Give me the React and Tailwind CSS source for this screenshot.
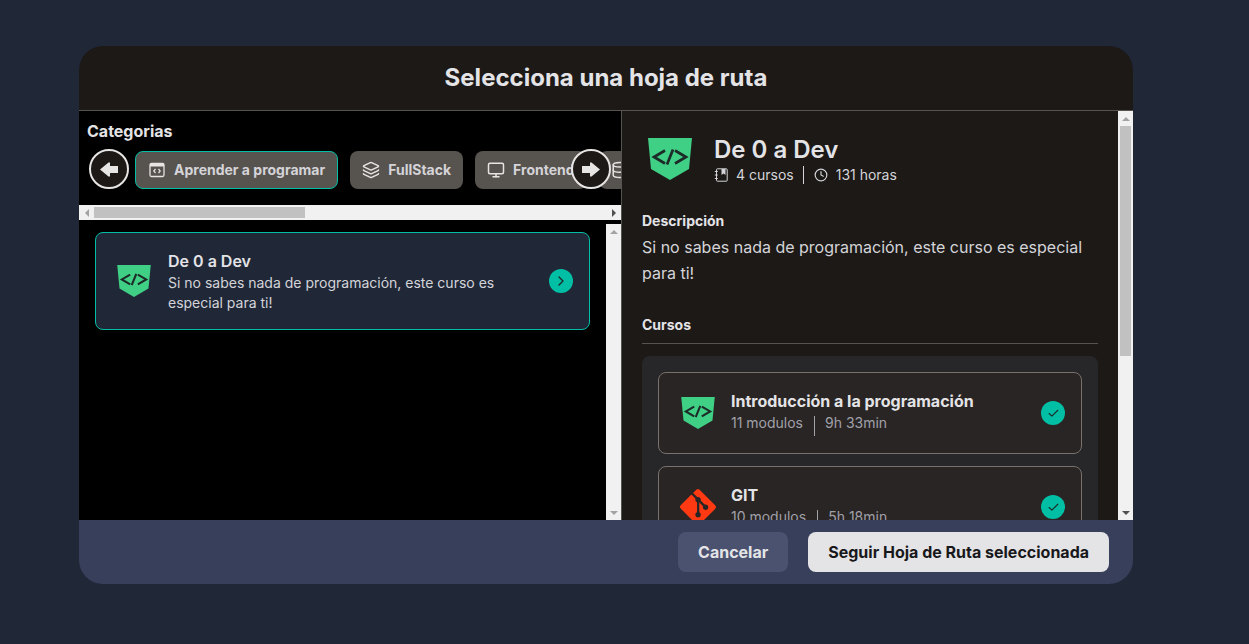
import React from "react";
import { Layers, Monitor, Database, Clock, Check, ChevronRight } from "lucide-react";
import { SiGit } from "react-icons/si";

function Shield({ className }) {
  return (
    <svg viewBox="0 0 44 42" className={className}>
      <path d="M0 0H44L41 31L22 42L3 31Z" fill="#3fcf85" />
      <path d="M17 12.500L6 19L17 25.500M27 12.500L38 19L27 25.500M25 11.500L19 26.500" fill="none" stroke="#1c2a28" strokeWidth="2.700" />
    </svg>
  );
}

function CodeWindow() {
  return (
    <svg viewBox="0 0 18 18" className="w-[18px] h-[18px] shrink-0" fill="none">
      <rect x="2" y="2.500" width="14" height="13" rx="1.500" stroke="#e7e5e4" strokeWidth="1.300" />
      <rect x="2" y="2.500" width="14" height="3" fill="#e7e5e4" />
      <path d="M7.500 8L5.800 10L7.500 12M10.500 8L12.200 10L10.500 12" stroke="#e7e5e4" strokeWidth="1.200" />
    </svg>
  );
}

function Notebook() {
  return (
    <svg viewBox="0 0 14 14" className="w-[14px] h-[14px] shrink-0" fill="none">
      <rect x="2.500" y="0.800" width="10.700" height="12.400" rx="0.800" stroke="#d4d4d8" strokeWidth="1" />
      <path d="M7.500 1H11.500V7L9.500 5.500L7.500 7Z" fill="#d4d4d8" />
      <path d="M0.800 3.500H3.800M0.800 7H3.800M0.800 10.500H3.800" stroke="#d4d4d8" strokeWidth="1" />
    </svg>
  );
}

function BlockArrow({ flip }) {
  return (
    <svg viewBox="0 0 18 15" className={"w-[18px] h-[15px] " + (flip ? "-scale-x-100" : "")}>
      <path d="M0 7.500L8.500 0.500H10V4H18V11H10V14.500H8.500Z" fill="#e7e5e4" />
    </svg>
  );
}

function Tri({ dir, dark }) {
  const d = { up: "M4 1L8 5H0Z", down: "M0 1H8L4 5Z", left: "M5 0V8L1 4Z", right: "M1 0L5 4L1 8Z" }[dir];
  const box = dir === "up" || dir === "down" ? "0 0 8 6" : "0 0 6 8";
  const cls = dir === "up" || dir === "down" ? "w-2 h-[6px]" : "w-[6px] h-2";
  return (
    <svg viewBox={box} className={cls}>
      <path d={d} fill={dark ? "#505050" : "#a3a3a3"} />
    </svg>
  );
}

function VBar({ thumb, topDark, bottomDark }) {
  return (
    <div className="w-[15px] shrink-0 bg-[#f1f1f1] flex flex-col">
      <div className="h-[15px] shrink-0 flex items-center justify-center"><Tri dir="up" dark={topDark} /></div>
      <div className="flex-1 min-h-0 px-[2px]">
        {thumb ? <div className="bg-[#c1c1c1]" style={{ height: thumb }} /> : null}
      </div>
      <div className="h-[15px] shrink-0 flex items-center justify-center"><Tri dir="down" dark={bottomDark} /></div>
    </div>
  );
}

function HBar({ thumb }) {
  return (
    <div className="h-[15px] shrink-0 bg-[#f1f1f1] flex">
      <div className="w-[15px] shrink-0 flex items-center justify-center"><Tri dir="left" /></div>
      <div className="flex-1 min-w-0 py-[2px]">
        <div className="h-full bg-[#c1c1c1]" style={{ width: thumb }} />
      </div>
      <div className="w-[15px] shrink-0 flex items-center justify-center"><Tri dir="right" dark /></div>
    </div>
  );
}

function Pill({ icon, label, active }) {
  return (
    <button className={"h-[38px] px-3 flex items-center gap-2 rounded-lg shrink-0 bg-[#57534e] text-[#d4d4d8] text-sm font-bold " + (active ? "border border-[#00bfa5]" : "")}>
      {icon}
      <span>{label}</span>
    </button>
  );
}

function Course({ logo, title, mods, time }) {
  return (
    <div className="h-[82px] shrink-0 rounded-lg border border-[#78716c] bg-[#292524] flex items-center pl-[21px] pr-4">
      <div className="w-[36px] flex justify-center shrink-0">{logo}</div>
      <div className="ml-[15px] flex-1 pb-1">
        <div className="text-base font-bold text-[#e4e4e7] leading-6">{title}</div>
        <div className="flex items-center text-sm text-[#a1a1aa] leading-5">
          <span>{mods}</span>
          <span className="w-px h-5 bg-[#a1a1aa] ml-[11px] mr-[10px] mt-[3px] -mb-[3px]" />
          <span>{time}</span>
        </div>
      </div>
      <div className="w-6 h-6 rounded-full bg-[#00bfa5] flex items-center justify-center">
        <Check size={13} color="#1c2a28" strokeWidth={2} />
      </div>
    </div>
  );
}

export default function App() {
  return (
    <div className="min-h-screen bg-[#202838] pt-[46px] pl-[79px] font-['Inter',sans-serif]">
      <div className="w-[1054px] h-[538px] rounded-3xl overflow-hidden flex flex-col">
        <div className="h-[65px] shrink-0 bg-[#1c1917] border-b border-[#57534e] flex items-center justify-center">
          <h1 className="text-2xl font-bold text-[#e4e4e7]">Selecciona una hoja de ruta</h1>
        </div>
        <div className="flex-1 min-h-0 flex">
          <div className="w-[542px] shrink-0 bg-black flex flex-col">
            <div className="text-base font-bold text-[#e4e4e7] pl-2 pt-2 leading-6 h-[38px]">Categorias</div>
            <div className="relative h-[56px] shrink-0">
              <div className="overflow-hidden h-full pt-[2px]">
                <div className="w-[1315px] flex gap-3 pl-14">
                  <Pill active icon={<CodeWindow />} label="Aprender a programar" />
                  <Pill icon={<Layers size={18} color="#e7e5e4" />} label="FullStack" />
                  <Pill icon={<Monitor size={18} color="#e7e5e4" />} label="Frontend" />
                  <Pill icon={<Database size={18} color="#e7e5e4" />} label="Backend" />
                </div>
              </div>
              <button className="absolute left-[10px] top-0 w-10 h-10 rounded-full bg-[#1c1917] border-2 border-[#e7e5e4] flex items-center justify-center">
                <BlockArrow />
              </button>
              <button className="absolute left-[492px] top-0 w-10 h-10 rounded-full bg-[#1c1917] border-2 border-[#e7e5e4] flex items-center justify-center">
                <BlockArrow flip />
              </button>
            </div>
            <HBar thumb={211} />
            <div className="flex-1 min-h-0 flex mt-1">
              <div className="flex-1 min-w-0 px-4 pt-2">
                <div className="h-[98px] rounded-lg border border-[#00bfa5] bg-[#202838] flex items-center pl-[21px] pr-4">
                  <Shield className="w-[34px] h-[32px] shrink-0" />
                  <div className="ml-[17px] flex-1 min-w-0">
                    <div className="text-base font-semibold text-[#e4e4e7] leading-6">De 0 a Dev</div>
                    <p className="text-sm text-[#d4d4d8] leading-5 w-[340px]">Si no sabes nada de programación, este curso es especial para ti!</p>
                  </div>
                  <div className="w-6 h-6 rounded-full bg-[#00bfa5] flex items-center justify-center shrink-0">
                    <ChevronRight size={16} color="#1c2a28" strokeWidth={2} />
                  </div>
                </div>
              </div>
              <VBar />
            </div>
          </div>
          <div className="flex-1 min-w-0 bg-[#1c1917] border-l border-[#57534e] flex">
            <div className="flex-1 min-w-0 overflow-hidden px-5 pt-[26px]">
              <div className="flex items-start">
                <Shield className="w-[44px] h-[44px] ml-[6px] shrink-0" />
                <div className="ml-[22px]">
                  <div className="text-2xl font-semibold text-[#e4e4e7] leading-7 mt-[-1px]">De 0 a Dev</div>
                  <div className="flex items-center text-sm text-[#d4d4d8] leading-5 mt-[1px]">
                    <Notebook />
                    <span className="ml-2">4 cursos</span>
                    <span className="w-px h-[18px] bg-[#d4d4d8] ml-[9px] mr-[10px]" />
                    <Clock size={14} color="#d4d4d8" />
                    <span className="ml-2">131 horas</span>
                  </div>
                </div>
              </div>
              <div className="text-sm font-bold text-[#e4e4e7] mt-[26px] leading-5">Descripción</div>
              <p className="text-base text-[#d4d4d8] leading-[26px] mt-[3px]">Si no sabes nada de programación, este curso es especial para ti!</p>
              <div className="text-sm font-bold text-[#e4e4e7] mt-[29px] leading-5 pb-2 border-b border-[#57534e]">Cursos</div>
              <div className="mt-3 rounded-lg bg-[#27272a] p-4 flex flex-col gap-3">
                <Course logo={<Shield className="w-[34px] h-[32px]" />} title="Introducción a la programación" mods="11 modulos" time="9h 33min" />
                <Course logo={<SiGit size={36} color="#ff3a12" />} title="GIT" mods="10 modulos" time="5h 18min" />
              </div>
            </div>
            <VBar thumb={230} bottomDark />
          </div>
        </div>
        <div className="h-16 shrink-0 bg-[#373f5a] flex items-center justify-end gap-5 pr-6">
          <button className="h-10 px-5 rounded-lg bg-[#4b5270] text-[#e4e4e7] text-base font-bold">Cancelar</button>
          <button className="h-10 px-5 rounded-lg bg-[#e4e4e7] text-[#18181b] text-base font-bold">Seguir Hoja de Ruta seleccionada</button>
        </div>
      </div>
    </div>
  );
}
